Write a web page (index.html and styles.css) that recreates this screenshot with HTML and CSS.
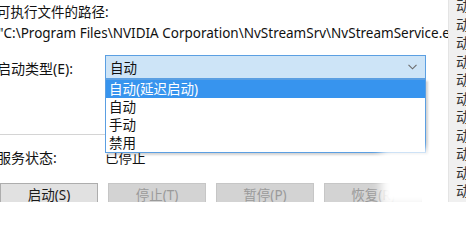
FILE: index.html
```html
<!DOCTYPE html>
<html lang="zh-CN">
<head>
<meta charset="utf-8">
<title>NvStreamService 属性</title>
<link rel="stylesheet" href="styles.css">
</head>
<body>
<div class="page">
  <div class="main">
    <div class="line first">可执行文件的路径:</div>
    <div class="line path">"C:\Program Files\NVIDIA Corporation\NvStreamSrv\NvStreamService.exe"</div>
    <div class="type-row">
      <div class="label">启动类型(E):</div>
      <div class="combo">
        <span class="combo-text">自动</span>
        <svg class="chevron" width="9" height="6" viewBox="0 0 9 6"><path d="M0.5 0.8 L4.5 4.8 L8.5 0.8" fill="none" stroke="#6b6b6b" stroke-width="1.1"/></svg>
      </div>
    </div>
    <div class="separator"></div>
    <div class="status-row">
      <div class="label">服务状态:</div>
      <div class="status-value">已停止</div>
    </div>
    <div class="buttons">
      <div class="btn">启动(S)</div>
      <div class="btn disabled">停止(T)</div>
      <div class="btn disabled">暂停(P)</div>
      <div class="btn disabled">恢复(R)</div>
    </div>
    <ul class="dropdown">
      <li class="item selected">自动(延迟启动)</li>
      <li class="item">自动</li>
      <li class="item">手动</li>
      <li class="item">禁用</li>
    </ul>
    <div class="glare"></div>
  </div>
  <div class="strip">
    <span>动</span><span>动</span><span>动</span><span>动</span><span>动</span><span>动</span><span>动</span><span>动</span><span>动</span><span>动</span><span>动</span>
  </div>
</div>
</body>
</html>
```
FILE: styles.css
```css
html, body {
  margin: 0;
  padding: 0;
  background: #ffffff;
  overflow: hidden;
}
body {
  width: 466px;
  height: 202px;
  font-family: "Noto Sans", "Noto Sans CJK SC", sans-serif;
  font-size: 13.5px;
  color: #111111;
}
.page {
  display: grid;
  grid-template-columns: 448px 18px;
  height: 202px;
}
.main {
  position: relative;
  margin-left: -3px;
}
.line {
  line-height: 16px;
  white-space: nowrap;
}
.first {
  margin-top: 4px;
}
.path {
  margin-top: 5px;
  margin-left: 1px;
}
.type-row {
  display: flex;
  margin-top: 14px;
  height: 24px;
}
.label {
  width: 108px;
  line-height: 16px;
  white-space: nowrap;
  font-size: 14px;
}
.type-row .label {
  padding-top: 6px;
}
.combo {
  width: 321px;
  height: 24px;
  box-sizing: border-box;
  border: 1px solid #5b9fe2;
  background: #cde4f7;
  display: flex;
  align-items: center;
  justify-content: space-between;
  padding: 0 8px 0 4px;
}
.combo-text {
  line-height: 16px;
  margin-top: 1px;
}
.separator {
  margin-top: 55px;
  height: 1px;
  width: 420px;
  background: #d4d4d4;
}
.status-row {
  display: flex;
  margin-top: 15px;
  line-height: 16px;
}
.buttons {
  display: flex;
  gap: 10px;
  margin-top: 17px;
  margin-left: 3px;
}
.btn {
  width: 96px;
  height: 22px;
  border: 1px solid #adadad;
  background: #e1e1e1;
  text-align: center;
  line-height: 22px;
  color: #1a1a1a;
  flex: none;
}
.btn.disabled {
  background: #d3d3d3;
  border-color: #c6c6c6;
  color: #9a9a9a;
}
.dropdown {
  position: absolute;
  left: 108px;
  top: 79px;
  width: 319px;
  margin: 0;
  padding: 0;
  list-style: none;
  background: #ffffff;
  border: 1px solid #5b9fe2;
  box-shadow: 2px 2px 2px rgba(0, 0, 0, 0.18);
}
.item {
  height: 18px;
  line-height: 18px;
  padding-left: 3px;
}
.item.selected {
  background: #3794ee;
  color: #ffffff;
}
.glare {
  position: absolute;
  left: 384px;
  top: 150px;
  width: 64px;
  height: 56px;
  background: #ffffff;
  filter: blur(5px);
}
.strip {
  background: #f0f0f0;
  border-left: 1px solid #e4e4e4;
  overflow: hidden;
  position: relative;
  z-index: 1;
}
.strip span {
  display: block;
  height: 18.5px;
  line-height: 18.5px;
  padding-left: 7px;
  font-family: "Noto Sans CJK SC", sans-serif;
  font-size: 14px;
  color: #333333;
  white-space: nowrap;
}
.strip span:first-child {
  margin-top: -4px;
}
```
